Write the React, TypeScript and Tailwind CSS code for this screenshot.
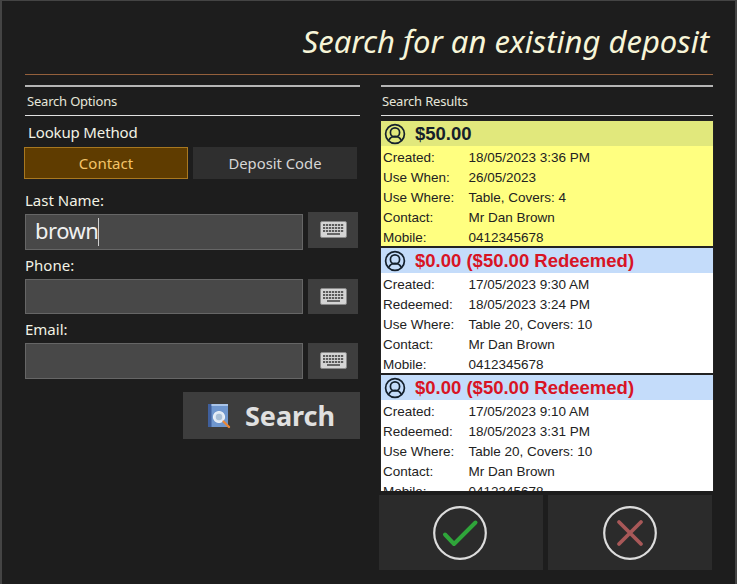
const UI = '[font-family:"Noto_Sans",Tahoma,sans-serif]';

type Deposit = {
  amount: string;
  redeemed: boolean;
  rows: [string, string][];
};

const DEPOSITS: Deposit[] = [
  {
    amount: '$50.00',
    redeemed: false,
    rows: [
      ['Created:', '18/05/2023 3:36 PM'],
      ['Use When:', '26/05/2023'],
      ['Use Where:', 'Table, Covers: 4'],
      ['Contact:', 'Mr Dan Brown'],
      ['Mobile:', '0412345678'],
    ],
  },
  {
    amount: '$0.00 ($50.00 Redeemed)',
    redeemed: true,
    rows: [
      ['Created:', '17/05/2023 9:30 AM'],
      ['Redeemed:', '18/05/2023 3:24 PM'],
      ['Use Where:', 'Table 20, Covers: 10'],
      ['Contact:', 'Mr Dan Brown'],
      ['Mobile:', '0412345678'],
    ],
  },
  {
    amount: '$0.00 ($50.00 Redeemed)',
    redeemed: true,
    rows: [
      ['Created:', '17/05/2023 9:10 AM'],
      ['Redeemed:', '18/05/2023 3:31 PM'],
      ['Use Where:', 'Table 20, Covers: 10'],
      ['Contact:', 'Mr Dan Brown'],
      ['Mobile:', '0412345678'],
    ],
  },
];

function KeyboardIcon() {
  return (
    <svg width="27" height="17" viewBox="0 0 27 17">
      <rect x="0.5" y="0.5" width="26" height="16" rx="1.5" fill="#d4d4d4" stroke="#8a8a8a" />
      {[3, 6, 9].map(y =>
        [3, 6, 9, 12, 15, 18, 21].map(x => <rect key={`${x}-${y}`} x={x} y={y} width="2.2" height="2" fill="#5c5c5c" />),
      )}
      <rect x="7" y="12" width="13" height="2" fill="#666" />
    </svg>
  );
}

function PersonIcon() {
  return (
    <svg width="22" height="22" viewBox="0 0 22 22" fill="none" stroke="#14202c" strokeWidth="1.7">
      <circle cx="11" cy="11" r="9.4" />
      <circle cx="11" cy="9.400" r="4.600" />
      <path d="M4.800 17.400c1.200-2.800 3.400-4 6.200-4s5 1.200 6.200 4" />
    </svg>
  );
}

function BookSearchIcon() {
  return (
    <svg width="24" height="26" viewBox="0 0 24 26">
      <rect x="1" y="1" width="20" height="23" rx="1" fill="#6f97cf" />
      <rect x="1" y="1" width="3.500" height="23" fill="#3f5f9c" />
      <rect x="4.500" y="1" width="16.500" height="2" fill="#a9c4e8" />
      <circle cx="12" cy="14" r="5.500" fill="#dfe9f4" stroke="#eef3f9" strokeWidth="1.200" />
      <circle cx="12" cy="14" r="3.200" fill="#a9bfd6" />
      <path d="M16.500 18.500 L22 24" stroke="#e8883a" strokeWidth="2.400" strokeLinecap="round" />
    </svg>
  );
}

function Field({ label, value }: { label: string; value?: string }) {
  return (
    <div>
      <div className="h-[29px] pt-[5px] text-[15px] leading-[20px] text-[#f2f2e4]">{label}</div>
      <div className="flex items-start gap-[5px]">
        <div className="w-[278px] h-[35.500px] bg-[#484848] border border-[#666] flex items-center pl-[9px] pb-[3px] text-[22px] tracking-[-0.5px] leading-none text-[#f0f0f0]">
          {value}
          {value && <span className="w-px h-[28px] mt-[3px] bg-[#d0d0d0]" />}
        </div>
        <div className={`w-[50px] h-[35.500px] bg-[#3e3e3e] flex items-center justify-center ${value ? '-mt-[2px]' : ''}`}>
          <KeyboardIcon />
        </div>
      </div>
    </div>
  );
}

function DepositCard({ deposit }: { deposit: Deposit }) {
  return (
    <div className={`border-b-2 border-[#222] ${deposit.redeemed ? 'bg-white' : 'bg-[#ffff80]'}`}>
      <div className={`h-[25px] flex items-center pl-[3px] gap-[9px] ${deposit.redeemed ? 'bg-[#c4dcfa]' : 'bg-[#e1e87c]'}`}>
        <PersonIcon />
        <span className={`text-[18.500px] font-bold ${deposit.redeemed ? 'text-[#d81424]' : 'text-[#15202a]'}`}>{deposit.amount}</span>
      </div>
      <div className="pl-[2px] text-[13.500px] text-[#222]">
        {deposit.rows.map(([k, v]) => (
          <div key={k} className="flex h-[20px] pt-[3px] items-center leading-[17px]">
            <span className="w-[85.500px] shrink-0">{k}</span>
            <span>{v}</span>
          </div>
        ))}
      </div>
    </div>
  );
}

export default function App() {
  return (
    <div className={`w-[737px] h-[584px] overflow-hidden bg-[#1d1d1d] border-t border-l-2 border-r-2 border-[#444] ${UI}`}>
      <div className="pl-[23px] pr-[22px]">
        <h1 className="h-[73px] pt-[20px] pr-[4px] text-right text-[31px] leading-[40px] italic font-normal text-[#f7f5d8]">
          Search for an existing deposit
        </h1>
        <div className="h-px bg-[#94603c]" />

        <div className="flex mt-[10px]">
          {/* Left column */}
          <div className="w-[334.500px] shrink-0">
            <div className="border-t-2 border-[#b5b5b5] border-b border-b-[#e0e0e0] h-[31px] pl-[2px] pt-[1px] flex items-center text-[13px] tracking-[-0.2px] text-[#e6e6da]">
              Search Options
            </div>
            <div className="h-[31px] pl-[3px] pt-[6px] text-[15px] tracking-[-0.15px] leading-[20px] text-[#f2f2e4]">Lookup Method</div>
            <div className="flex gap-[5px] -ml-px">
              <button className="w-[164px] h-[32px] bg-[#5f3c00] border border-[#a87820] text-[15px] text-[#f3c469]">Contact</button>
              <button className="w-[164px] h-[32px] bg-[#2f2f2f] text-[14.800px] text-[#d6d6d6]">Deposit Code</button>
            </div>
            <div className="mt-[6px]">
              <Field label="Last Name:" value="brown" />
              <Field label="Phone:" />
              <Field label="Email:" />
            </div>
            <div className="flex justify-end mt-[13.500px]">
              <button className="w-[177px] h-[47px] bg-[#3d3d3d] flex items-center justify-center gap-[14px]">
                <BookSearchIcon />
                <span className="text-[27px] leading-[40px] font-bold text-[#e0e0e0]">Search</span>
              </button>
            </div>
          </div>

          {/* Right column */}
          <div className="w-[332px] ml-[21.500px] shrink-0">
            <div className="border-t-2 border-[#b5b5b5] border-b border-b-[#e0e0e0] h-[31px] pl-px pt-[1px] flex items-center text-[13px] tracking-[-0.2px] text-[#e6e6da]">
              Search Results
            </div>
            <div className="w-[334px] -ml-px mt-[4px] h-[371px] overflow-hidden border-x border-t border-[#222] [font-family:'Liberation_Sans',Arial,sans-serif]">
              {DEPOSITS.map((d, i) => (
                <DepositCard key={i} deposit={d} />
              ))}
            </div>
            <div className="flex gap-[5px] mt-[4px] -ml-[2px]">
              <button className="w-[164px] h-[75px] bg-[#2b2b2b] flex items-center justify-center pr-[3px]">
                <svg width="54" height="54" viewBox="0 0 54 54" fill="none">
                  <circle cx="27" cy="27" r="25.800" stroke="#dcdcdc" strokeWidth="2.200" />
                  <path d="M12 28.500 L21 38 L42.500 16.500" stroke="#2fa53a" strokeWidth="4" strokeLinejoin="round" strokeLinecap="round" />
                </svg>
              </button>
              <button className="w-[164px] h-[75px] bg-[#2b2b2b] flex items-center justify-center">
                <svg width="54" height="54" viewBox="0 0 54 54" fill="none">
                  <circle cx="27" cy="27" r="25.800" stroke="#dcdcdc" strokeWidth="2.200" />
                  <path d="M16 16 L38 38 M38 16 L16 38" stroke="#a85858" strokeWidth="3.800" strokeLinecap="round" />
                </svg>
              </button>
            </div>
          </div>
        </div>
      </div>
    </div>
  );
}
